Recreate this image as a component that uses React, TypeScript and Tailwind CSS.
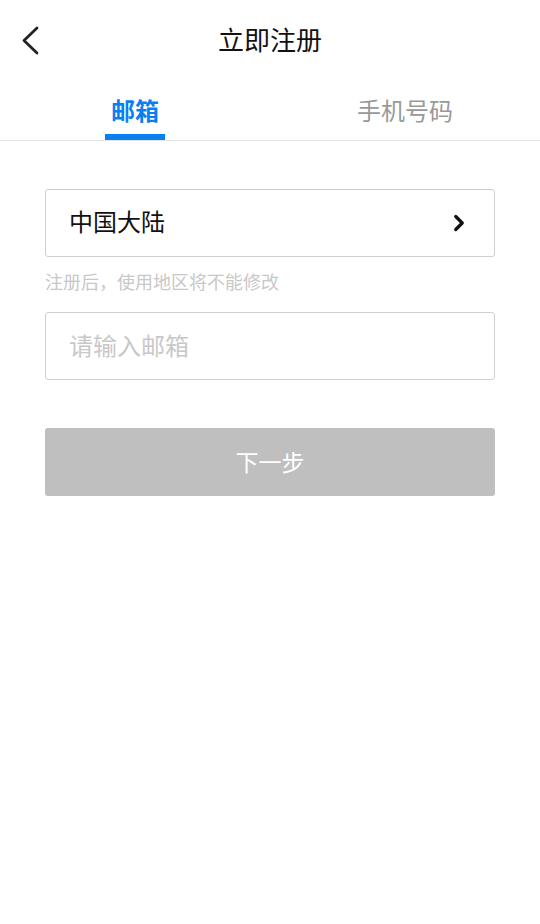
import { ChevronRight } from 'lucide-react'

const font = { fontFamily: '"Noto Sans CJK SC", "Noto Sans", sans-serif' }

export default function App() {
  return (
    <div className="flex h-[924px] w-[540px] flex-col bg-white" style={font}>
      {/* Header */}
      <div className="relative flex h-[82px] items-center justify-center pb-[4px]">
        <button className="absolute left-[20px] top-[26px] text-[#222]">
          <svg width="20" height="29" viewBox="0 0 20 29" fill="none">
            <polyline points="17,2 4,14.5 17,27" stroke="currentColor" strokeWidth="2.8" strokeLinecap="round" strokeLinejoin="round" />
          </svg>
        </button>
        <h1 className="text-[26px] leading-none text-[#111]">立即注册</h1>
      </div>

      {/* Tabs */}
      <div className="flex h-[59px] border-b border-[#e2e2e2]">
        <div className="flex flex-1 flex-col items-center justify-end">
          <span className="text-[24px] font-bold leading-none text-[#0a7ff0]">邮箱</span>
          <div className="mt-[12px] h-[6px] w-[60px] bg-[#0a7ff0]" />
        </div>
        <div className="flex flex-1 flex-col items-center justify-end">
          <span className="text-[24px] leading-none text-[#999]">手机号码</span>
          <div className="mt-[12px] h-[6px] w-[60px]" />
        </div>
      </div>

      {/* Form */}
      <div className="flex flex-col px-[45px] pt-[48px]">
        <div className="flex h-[68px] items-center justify-between rounded-[3px] border border-[#cfcfcf] pl-[23px] pr-[22px]">
          <span className="pb-[4px] text-[24px] leading-none text-[#111]">中国大陆</span>
          <ChevronRight size={26} strokeWidth={3} className="text-[#111]" />
        </div>
        <p className="mt-[12px] text-[18px] leading-[24px] text-[#c8c8c8]">注册后，使用地区将不能修改</p>
        <div className="mt-[19px] flex h-[68px] items-center rounded-[3px] border border-[#cfcfcf] pb-[4px] pl-[23px]">
          <input
            placeholder="请输入邮箱"
            className="w-full bg-transparent text-[24px] leading-none text-[#111] outline-none placeholder:text-[#c8c8c8]"
            style={font}
          />
        </div>
        <button className="mt-[48px] flex h-[68px] items-center justify-center rounded-[3px] bg-[#bfbfbf] pb-[2px] text-[23px] text-white">
          下一步
        </button>
      </div>
    </div>
  )
}
